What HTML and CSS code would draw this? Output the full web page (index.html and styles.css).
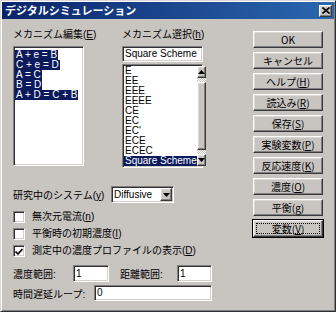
FILE: index.html
```html
<!DOCTYPE html>
<html lang="ja">
<head>
<meta charset="utf-8">
<title>デジタルシミュレーション</title>
<link rel="stylesheet" href="styles.css">
</head>
<body>
<div class="window">
  <div class="titlebar">
    <span class="title">デジタルシミュレーション</span>
    <span class="close raised"><svg width="8" height="7" viewBox="0 0 8 7"><path d="M0.5 0.5 L7.5 6.5 M7.5 0.5 L0.5 6.5" stroke="#000" stroke-width="1.6"/></svg></span>
  </div>
  <div class="body">
    <div class="left">
      <div class="lists">
        <div class="col col1">
          <div class="label">メカニズム編集(<u>E</u>)</div>
          <div class="edit sunken">
            <div class="line"><span class="sel">A + e = B</span></div>
            <div class="line"><span class="sel">C + e = D</span></div>
            <div class="line"><span class="sel">A = C</span></div>
            <div class="line"><span class="sel">B = D</span></div>
            <div class="line"><span class="sel">A + D = C + B</span></div>
          </div>
        </div>
        <div class="col col2">
          <div class="label">メカニズム選択(<u>h</u>)</div>
          <div class="field sunken scheme">Square Scheme</div>
          <div class="list sunken">
            <div class="items">
              <div class="item">E</div>
              <div class="item">EE</div>
              <div class="item">EEE</div>
              <div class="item">EEEE</div>
              <div class="item">CE</div>
              <div class="item">EC</div>
              <div class="item">EC'</div>
              <div class="item">ECE</div>
              <div class="item">ECEC</div>
              <div class="item selected">Square Scheme</div>
            </div>
            <div class="scrollbar">
              <div class="sbtn raised"><svg width="7" height="4" viewBox="0 0 7 4"><path d="M0 4 L3.5 0 L7 4 Z" fill="#000"/></svg></div>
              <div class="track t1"></div>
              <div class="thumb raised"></div>
              <div class="track t2"></div>
              <div class="sbtn raised"><svg width="7" height="4" viewBox="0 0 7 4"><path d="M0 0 L7 0 L3.5 4 Z" fill="#000"/></svg></div>
            </div>
          </div>
        </div>
      </div>
      <div class="row system">
        <span class="syslabel">研究中のシステム(<u>y</u>)</span>
        <div class="combo sunken">
          <span class="combotext">Diffusive</span>
          <span class="drop raised"><svg width="7" height="4" viewBox="0 0 7 4"><path d="M0 0 L7 0 L3.5 4 Z" fill="#000"/></svg></span>
        </div>
      </div>
      <div class="checks">
        <div class="check"><span class="box sunken"></span><span>無次元電流(<u>n</u>)</span></div>
        <div class="check"><span class="box sunken"></span><span>平衡時の初期濃度(<u>I</u>)</span></div>
        <div class="check"><span class="box sunken"><svg width="8" height="7" viewBox="0 0 8 7"><path d="M0.5 3.5 L3 6 L7.5 1" stroke="#000" stroke-width="1.6" fill="none"/></svg></span><span>測定中の濃度プロファイルの表示(<u>D</u>)</span></div>
      </div>
      <div class="row inrow1">
        <span class="l1">濃度範囲:</span>
        <div class="field sunken in1">1</div>
        <span class="l2">距離範囲:</span>
        <div class="field sunken in2">1</div>
      </div>
      <div class="row inrow2">
        <span class="l3">時間遅延ループ:</span>
        <div class="field sunken in3">0</div>
      </div>
    </div>
    <div class="buttons">
      <div class="btn raised">OK</div>
      <div class="btn raised">キャンセル</div>
      <div class="btn raised">ヘルプ(<u>H</u>)</div>
      <div class="btn raised">読込み(<u>R</u>)</div>
      <div class="btn raised">保存(<u>S</u>)</div>
      <div class="btn raised">実験変数(<u>P</u>)</div>
      <div class="btn raised">反応速度(<u>K</u>)</div>
      <div class="btn raised">濃度(<u>O</u>)</div>
      <div class="btn raised">平衡(<u>g</u>)</div>
      <div class="btn raised focus"><span class="focusin">変数(<u>V</u>)</span></div>
    </div>
  </div>
</div>
</body>
</html>
```

FILE: styles.css
```css
* { box-sizing: border-box; }
body {
  margin: 0;
  background: #c8c4c0;
  font-family: "Liberation Sans", "Noto Sans CJK JP", sans-serif;
  font-size: 10px;
  color: #000;
}
u { text-decoration: underline; text-underline-offset: 1px; }
.window {
  width: 336px;
  height: 312px;
  background: #c8c4c0;
  border: 1px solid;
  border-color: #dcd8d4 #303030 #303030 #dcd8d4;
  box-shadow: inset 1px 1px #fff, inset -1px -1px #808080;
  padding: 1px;
}
.raised {
  background: #c8c4c0;
  border: 1px solid;
  border-color: #fff #383838 #383838 #fff;
  box-shadow: inset -1px -1px #808080, inset 1px 1px #dcd8d4;
}
.sunken {
  background: #fff;
  border: 1px solid;
  border-color: #808080 #fff #fff #808080;
  box-shadow: inset 1px 1px #303030, inset -1px -1px #d4d0c8;
}
.titlebar {
  height: 17px;
  background: linear-gradient(to right, #0a246a, #2a68b0);
  display: flex;
  align-items: center;
  justify-content: space-between;
  padding: 0 2px 0 3px;
}
.title {
  color: #fff;
  font-weight: bold;
  font-size: 11px;
  line-height: 17px;
  font-family: "Noto Sans CJK JP", sans-serif;
}
.close {
  width: 13px;
  height: 12px;
  display: flex;
  align-items: center;
  justify-content: center;
}
.body { display: flex; padding-left: 11px; }
.left { width: 199px; display: flex; flex-direction: column; }
.lists { display: flex; padding-top: 10px; }
.col { display: flex; flex-direction: column; }
.col1 { width: 71px; }
.col2 { width: 81px; margin-left: 38px; }
.label { height: 12px; line-height: 12px; margin-bottom: 5px; white-space: nowrap; }
.edit { height: 120px; padding: 2px 1px; }
.line { height: 10px; line-height: 10px; }
.line:first-child { margin-top: 1px; }
.sel {
  display: inline-block;
  height: 10px;
  line-height: 10px;
  background: #0a1a5c;
  color: #fff;
  padding: 0 1px;
  white-space: pre;
}
.field { height: 16px; line-height: 14px; padding-left: 2px; white-space: nowrap; overflow: hidden; }
.scheme { padding-left: 2px; }
.list { height: 104px; margin-top: 2px; padding: 1px; display: flex; }
.items { flex: 1; }
.item { height: 10px; line-height: 10px; padding-left: 1px; white-space: nowrap; overflow: hidden; }
.item.selected { background: #0a1a5c; color: #fff; }
.scrollbar { width: 14px; display: flex; flex-direction: column; }
.sbtn { height: 12px; display: flex; align-items: center; justify-content: center; }
.track {
  background: repeating-conic-gradient(#fff 0 25%, #c8c4c0 0 50%) 0 0 / 2px 2px;
}
.t1 { height: 4px; }
.thumb { height: 68px; }
.t2 { flex: 1; }
.row { display: flex; align-items: center; white-space: nowrap; }
.system { margin-top: 18px; height: 17px; }
.syslabel { width: 98px; }
.combo { width: 63px; height: 17px; display: flex; align-items: center; justify-content: space-between; padding: 1px 1px 1px 2px; }
.combotext { line-height: 13px; }
.drop { width: 12px; height: 13px; display: flex; align-items: center; justify-content: center; }
.checks { margin-top: 6px; display: flex; flex-direction: column; }
.check { height: 17px; display: flex; align-items: flex-start; white-space: nowrap; }
.check > span:last-child { line-height: 12px; margin-top: 2px; }
.box { width: 12px; height: 12px; margin-top: 2px; margin-right: 7px; display: flex; align-items: center; justify-content: center; flex: none; }
.inrow1 { margin-top: 5px; height: 17px; }
.inrow2 { margin-top: 3px; height: 16px; }
.l1 { width: 60px; }
.in1 { width: 36px; height: 17px; line-height: 15px; }
.l2 { width: 57px; margin-left: 11px; }
.in2 { width: 35px; height: 17px; line-height: 15px; }
.l3 { width: 81px; }
.in3 { width: 118px; }
.buttons { margin-left: 41px; width: 70px; display: flex; flex-direction: column; gap: 4px; padding-top: 12px; }
.btn {
  height: 17px;
  display: flex;
  align-items: center;
  justify-content: center;
  font-family: "Noto Sans CJK JP", "Liberation Sans", sans-serif;
  line-height: 12px;
  white-space: nowrap;
}
.focus { outline: 1px solid #000; padding: 2px; }
.focusin {
  flex: 1;
  align-self: stretch;
  display: flex;
  align-items: center;
  justify-content: center;
  border: 1px dotted #000;
}
```
